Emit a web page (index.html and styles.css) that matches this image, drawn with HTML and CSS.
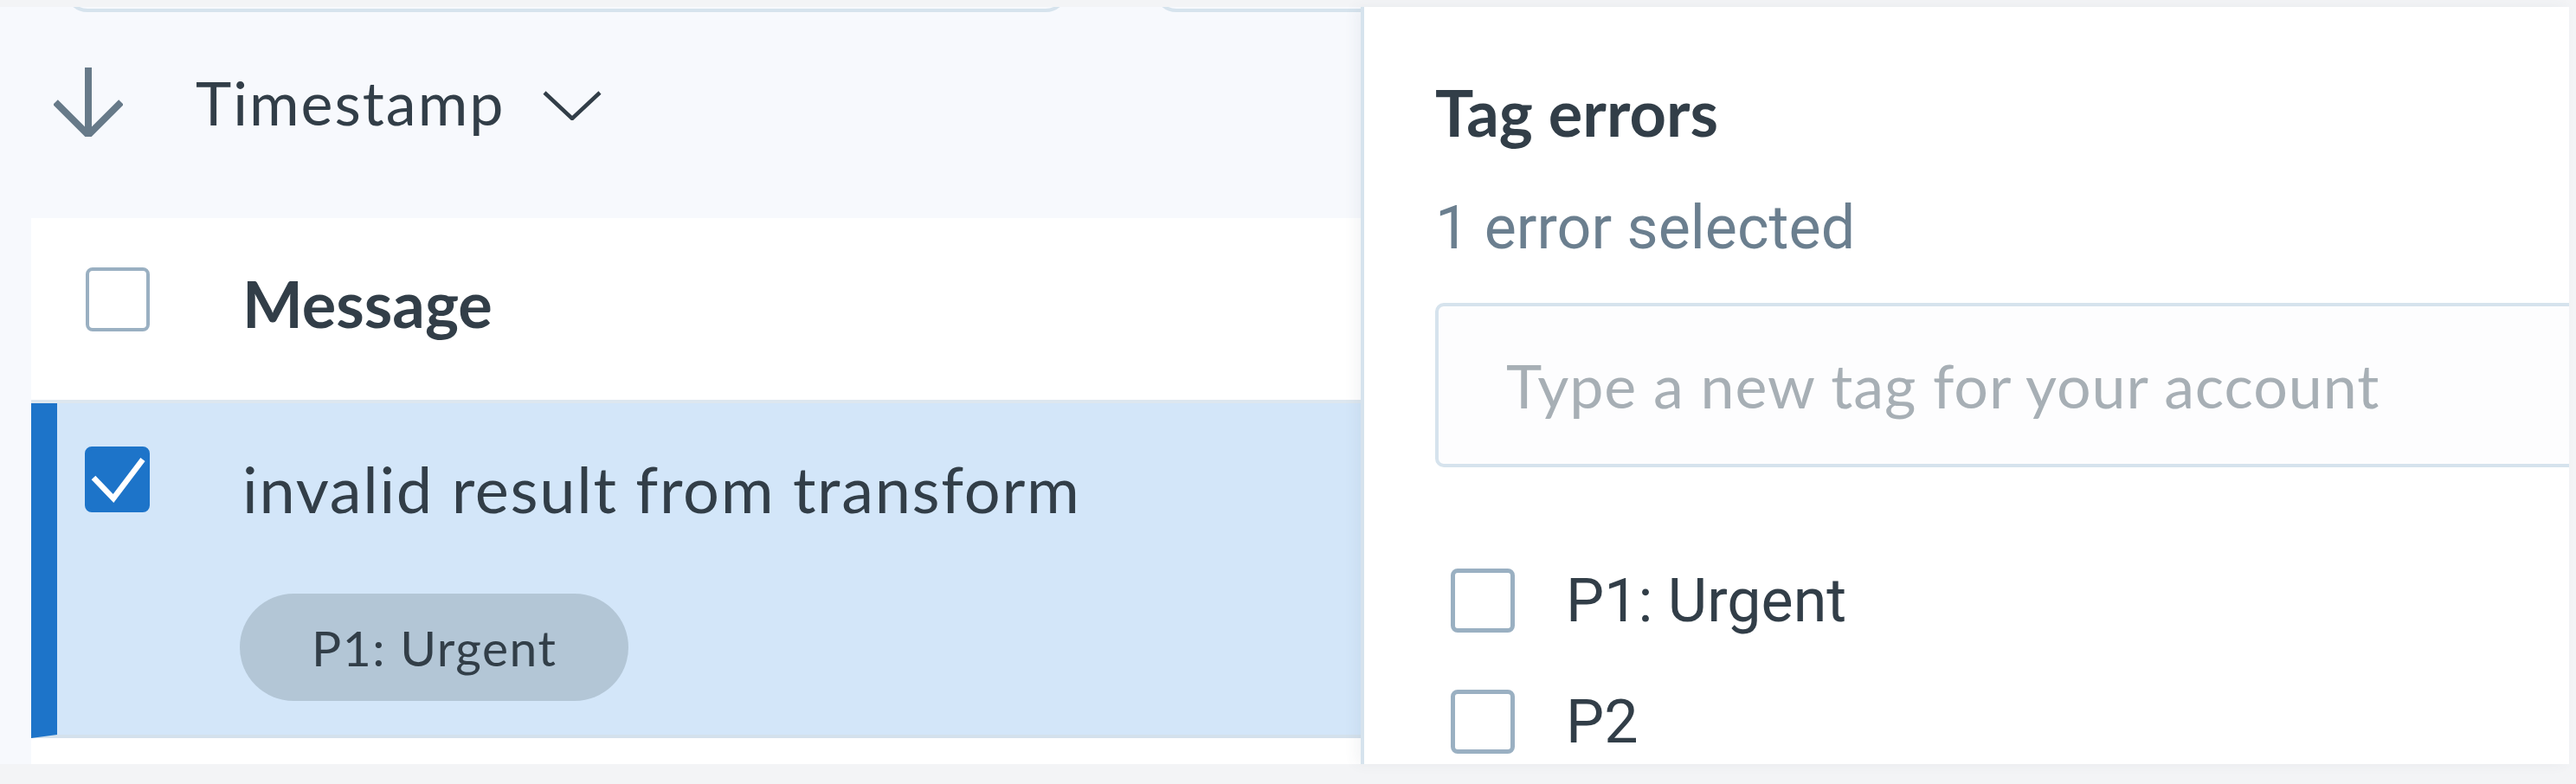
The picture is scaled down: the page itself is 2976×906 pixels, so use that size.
FILE: index.html
```html
<!DOCTYPE html>
<html lang="en">
<head>
<meta charset="utf-8">
<title>Tag errors</title>
<link rel="stylesheet" href="styles.css">
</head>
<body>
<div class="app">
  <main class="main">
    <div class="filters">
      <div class="filter filter-search"></div>
      <div class="filter filter-range"></div>
    </div>
    <div class="sortbar">
      <svg class="sort-arrow" width="80" height="80" viewBox="0 0 80 80" aria-hidden="true">
        <path d="M40 0 V76 M2 40 L40 78 L78 40" fill="none" stroke="#677a89" stroke-width="8" stroke-linejoin="miter"/>
      </svg>
      <span class="sort-label">Timestamp</span>
      <svg class="sort-chevron" width="68" height="34" viewBox="0 0 68 34" aria-hidden="true">
        <path d="M2 2 L34 32 L66 2" fill="none" stroke="#323e48" stroke-width="4.5"/>
      </svg>
    </div>
    <section class="card">
      <div class="row row-head">
        <span class="checkbox"></span>
        <span class="col-title">Message</span>
      </div>
      <div class="row row-selected">
        <span class="checkbox checkbox-on">
          <svg width="66" height="66" viewBox="0 0 66 66" aria-hidden="true">
            <path d="M5 31 L28 55 L62 10" fill="none" stroke="#fff" stroke-width="6.5"/>
          </svg>
        </span>
        <div class="row-body">
          <div class="message">invalid result from transform</div>
          <span class="pill">P1: Urgent</span>
        </div>
      </div>
    </section>
  </main>
  <aside class="panel">
    <h2 class="panel-title">Tag errors</h2>
    <p class="panel-sub">1 error selected</p>
    <input class="tag-input" type="text" placeholder="Type a new tag for your account">
    <ul class="tag-list">
      <li class="tag-item"><span class="checkbox checkbox-lg"></span><span class="tag-name">P1: Urgent</span></li>
      <li class="tag-item"><span class="checkbox checkbox-lg"></span><span class="tag-name">P2</span></li>
    </ul>
  </aside>
</div>
</body>
</html>
```
FILE: styles.css
```css
html, body {
  margin: 0;
  padding: 0;
  overflow: hidden;
}
body {
  background: #f3f4f6;
  font-family: "Lato", "Liberation Sans", sans-serif;
  color: #323e48;
}
.app {
  display: flex;
  height: 906px;
  padding: 8px 8px 23px 0;
  box-sizing: border-box;
}
.main {
  width: 1572px;
  flex: none;
  background: #f7f9fd;
  display: flex;
  flex-direction: column;
  overflow: hidden;
}
.filters {
  display: flex;
  height: 6px;
  align-items: flex-end;
  flex: none;
}
.filter {
  flex: none;
  height: 80px;
  box-sizing: border-box;
  border: 4px solid #d6e3ed;
  border-radius: 26px;
  background: #f7f9fd;
}
.filter-search {
  margin-left: 75px;
  width: 1159px;
}
.filter-range {
  margin-left: 99px;
  width: 420px;
}
.sortbar {
  height: 238px;
  flex: none;
  box-sizing: border-box;
  padding: 64px 0 0 62px;
  display: flex;
  align-items: flex-start;
}
.sort-arrow {
  display: block;
  flex: none;
}
.sort-label {
  margin-left: 84px;
  font-size: 70px;
  line-height: 80px;
  letter-spacing: 2px;
  color: #323e48;
}
.sort-chevron {
  display: block;
  margin: 27px 0 0 44px;
}
.card {
  flex: 1;
  margin-left: 36px;
  background: #fff;
  display: flex;
  flex-direction: column;
}
.row {
  display: flex;
  align-items: flex-start;
  box-sizing: border-box;
}
.row-head {
  height: 214px;
  padding: 57px 0 0 63px;
  border-bottom: 4px solid #dde7ef;
}
.checkbox {
  display: flex;
  align-items: center;
  justify-content: center;
  flex: none;
  width: 74px;
  height: 74px;
  box-sizing: border-box;
  border: 4px solid #9ab0c2;
  border-radius: 8px;
  background: #fff;
}
.col-title {
  margin: 5px 0 0 107px;
  font-size: 74px;
  line-height: 74px;
  font-weight: 700;
  color: #323e48;
}
.row-selected {
  height: 387px;
  padding: 50px 0 0 32px;
  background: #d3e6f9;
  border-left: 30px solid #1d74c9;
  border-bottom: 4px solid #d4e1ec;
}
.checkbox-on {
  background: #1d74c9;
  border-color: #1d74c9;
  width: 75px;
  height: 76px;
}
.checkbox-on svg {
  display: block;
}
.row-body {
  margin-left: 107px;
  padding-top: 12px;
  display: flex;
  flex-direction: column;
  align-items: flex-start;
}
.message {
  font-size: 74px;
  line-height: 74px;
  letter-spacing: 1.7px;
  color: #323e48;
}
.pill {
  margin-top: 84px;
  margin-left: -3px;
  height: 124px;
  display: inline-flex;
  align-items: center;
  padding: 0 83px;
  border-radius: 62px;
  background: #b3c6d6;
  font-size: 57px;
  letter-spacing: 1.5px;
  color: #323e48;
}
.panel {
  flex: 1;
  min-width: 0;
  background: #fff;
  border-left: 4px solid #d6e3ed;
  box-shadow: -6px 0 14px rgba(60, 80, 100, 0.06);
  padding-left: 82px;
  overflow: hidden;
}
.panel-title {
  margin: 85px 0 0;
  font-size: 74px;
  line-height: 74px;
  font-weight: 700;
  color: #323e48;
}
.panel-sub {
  margin: 61px 0 0;
  font-family: "Roboto", "Liberation Sans", sans-serif;
  font-size: 70px;
  line-height: 70px;
  color: #6b7f8f;
}
.tag-input {
  display: block;
  margin: 52px 0 0;
  width: 1400px;
  height: 190px;
  box-sizing: border-box;
  border: 4px solid #d6e3ed;
  border-radius: 10px;
  padding: 0 0 0 78px;
  background: #fdfdfe;
  font-family: "Lato", "Liberation Sans", sans-serif;
  font-size: 70px;
  letter-spacing: 0.9px;
  color: #323e48;
  outline: none;
}
.tag-input::placeholder {
  color: #a7afb5;
}
.tag-list {
  list-style: none;
  margin: 117px 0 0;
  padding: 0 0 0 18px;
  display: flex;
  flex-direction: column;
  gap: 66px;
}
.tag-item {
  display: flex;
  align-items: center;
}
.checkbox-lg {
  border-width: 5px;
}
.tag-name {
  margin-left: 59px;
  font-family: "Roboto", "Liberation Sans", sans-serif;
  font-size: 70px;
  line-height: 74px;
  color: #323e48;
}
```
